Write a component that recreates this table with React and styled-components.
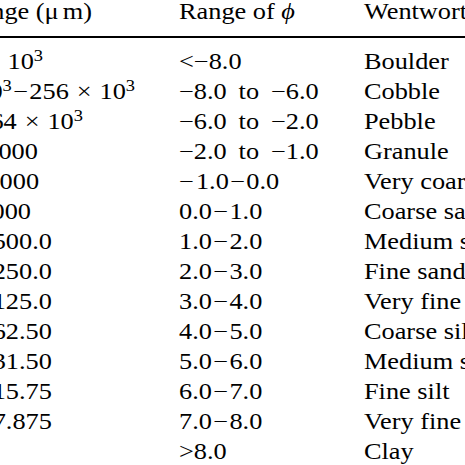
import React from 'react';
import styled, { createGlobalStyle } from 'styled-components';

const Global = createGlobalStyle`
  html, body { margin: 0; padding: 0; background: #fff; overflow: hidden; }
  body { width: 465px; height: 465px; }
`;

const Page = styled.div`
  width: 465px;
  height: 465px;
  overflow: hidden;
  background: #fff;
`;

const Stretch = styled.div`
  width: 398px;
  transform: scaleX(1.17);
  transform-origin: 0 0;
`;

const Table = styled.div`
  margin-left: -200px;
  width: 800px;
  font-family: "Liberation Serif", "Times New Roman", serif;
  font-size: 22.5px;
  color: #000;
`;

const Row = styled.div`
  display: grid;
  grid-template-columns: 244.4px 266.7px 1fr;
  line-height: 30px;
  white-space: nowrap;
`;

const HeadRow = styled(Row)`
  line-height: 24px;
  padding-bottom: 12px;
  border-bottom: 2px solid #000;
  margin-bottom: 9px;
`;

const SizeCell = styled.div`
  text-align: right;
  margin-right: ${p => p.$trim || 0}px;
`;

const PhiCell = styled.div`
  padding-left: 108.6px;
`;

const ClassCell = styled.div``;

const Sup = styled.span`
  font-size: 0.7em;
  line-height: 0;
  position: relative;
  top: -0.5em;
`;

const Op = styled.span`
  margin: 0 0.3em;
`;

const Phi = styled.span`
  font-style: italic;
`;

const Lead = styled.span`
  margin-right: 0.08em;
`;

const Dash = styled.span`
  margin: 0 0.05em;
`;

const To = styled.span`
  margin: 0 0.45em;
`;

const Mu = styled.span`
  margin-right: 0.15em;
`;

const Pow = ({ base }) => (
  <>
    {base}
    <Op>×</Op>10<Sup>3</Sup>
  </>
);

const Span = ({ from, to }) => (
  <>
    {from}<To>to</To>{to}
  </>
);

const rows = [
  { size: <>&gt; <Pow base="256" /></>, trim: 7.6, phi: <>&lt;−8.0</>, name: 'Boulder' },
  { size: <><Pow base="64" /><Dash>−</Dash><Pow base="256" /></>, trim: -71, phi: <Span from="−8.0" to="−6.0" />, name: 'Cobble' },
  { size: <>4<Op>×</Op>10<Sup>3</Sup><Dash>−</Dash><Pow base="64" /></>, trim: -26.5, phi: <Span from="−6.0" to="−2.0" />, name: 'Pebble' },
  { size: <>2000<Dash>−</Dash>4000</>, trim: 12, phi: <Span from="−2.0" to="−1.0" />, name: 'Granule' },
  { size: <>1000<Dash>−</Dash>2000</>, trim: 11, phi: <><Lead>−</Lead>1.0<Dash>−</Dash>0.0</>, name: 'Very coarse sand' },
  { size: <>500<Dash>−</Dash>1000</>, trim: 17.9, phi: <>0.0<Dash>−</Dash>1.0</>, name: 'Coarse sand' },
  { size: <>250.0<Dash>−</Dash>500.0</>, phi: <>1.0<Dash>−</Dash>2.0</>, name: 'Medium sand' },
  { size: <>125.0<Dash>−</Dash>250.0</>, phi: <>2.0<Dash>−</Dash>3.0</>, name: 'Fine sand' },
  { size: <>62.50<Dash>−</Dash>125.0</>, phi: <>3.0<Dash>−</Dash>4.0</>, name: 'Very fine sand' },
  { size: <>31.50<Dash>−</Dash>62.50</>, phi: <>4.0<Dash>−</Dash>5.0</>, name: 'Coarse silt' },
  { size: <>15.75<Dash>−</Dash>31.50</>, phi: <>5.0<Dash>−</Dash>6.0</>, name: 'Medium silt' },
  { size: <>7.875<Dash>−</Dash>15.75</>, phi: <>6.0<Dash>−</Dash>7.0</>, name: 'Fine silt' },
  { size: <>3.938<Dash>−</Dash>7.875</>, phi: <>7.0<Dash>−</Dash>8.0</>, name: 'Very fine silt' },
  { size: <>&lt;3.938</>, trim: 60, phi: <>&gt;8.0</>, name: 'Clay' },
];

export default function App() {
  return (
    <Page>
      <Global />
      <Stretch>
        <Table>
          <HeadRow>
            <SizeCell $trim={-34.2}>Size range (<Mu>μ</Mu>m)</SizeCell>
            <PhiCell>Range of <Phi>ϕ</Phi></PhiCell>
            <ClassCell>Wentworth size class</ClassCell>
          </HeadRow>
          {rows.map((r, i) => (
            <Row key={i}>
              <SizeCell $trim={r.trim}>{r.size}</SizeCell>
              <PhiCell>{r.phi}</PhiCell>
              <ClassCell>{r.name}</ClassCell>
            </Row>
          ))}
        </Table>
      </Stretch>
    </Page>
  );
}
